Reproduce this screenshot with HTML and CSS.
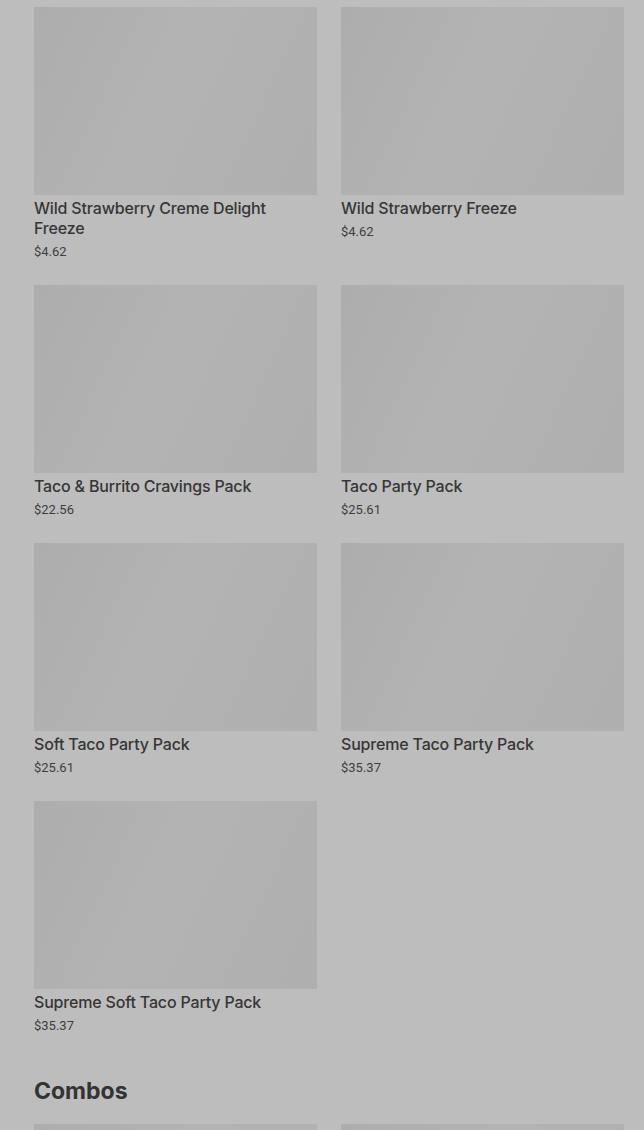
FILE: index.html
```html
<!DOCTYPE html>
<html lang="en">
<head>
    <meta charset="UTF-8">
    <meta name="viewport" content="width=device-width, initial-scale=1.0">
    <title>Menu</title>
    <link rel="stylesheet" href="styles.css">
</head>
<body>
    <div class="menu">
        <div class="grid">
            <div class="card">
                <div class="thumb"></div>
                <div class="name">Wild Strawberry Creme Delight Freeze</div>
                <div class="price">$4.62</div>
            </div>
            <div class="card">
                <div class="thumb"></div>
                <div class="name">Wild Strawberry Freeze</div>
                <div class="price">$4.62</div>
            </div>
            <div class="card">
                <div class="thumb"></div>
                <div class="name">Taco &amp; Burrito Cravings Pack</div>
                <div class="price">$22.56</div>
            </div>
            <div class="card">
                <div class="thumb"></div>
                <div class="name">Taco Party Pack</div>
                <div class="price">$25.61</div>
            </div>
            <div class="card">
                <div class="thumb"></div>
                <div class="name">Soft Taco Party Pack</div>
                <div class="price">$25.61</div>
            </div>
            <div class="card">
                <div class="thumb"></div>
                <div class="name">Supreme Taco Party Pack</div>
                <div class="price">$35.37</div>
            </div>
            <div class="card">
                <div class="thumb"></div>
                <div class="name">Supreme Soft Taco Party Pack</div>
                <div class="price">$35.37</div>
            </div>
        </div>

        <h2 class="section-title">Combos</h2>

        <div class="grid">
            <div class="card">
                <div class="thumb"></div>
            </div>
            <div class="card">
                <div class="thumb"></div>
            </div>
        </div>
    </div>
</body>
</html>
```

FILE: styles.css
```css
body {
    margin: 0;
    background-color: #bdbdbd;
    font-family: 'Inter', 'Liberation Sans', sans-serif;
    color: #363636;
}

.menu {
    padding: 7px 20px 0 34px;
}

.grid {
    display: grid;
    grid-template-columns: 1fr 1fr;
    column-gap: 24px;
    row-gap: 24px;
}

.thumb {
    height: 188px;
    background: linear-gradient(115deg, #adadad 0%, #b3b3b3 45%, #afafaf 100%);
}

.name {
    margin-top: 3px;
    font-size: 16px;
    font-weight: 500;
    line-height: 20px;
    letter-spacing: -0.18px;
    padding-right: 40px;
}

.price {
    margin-top: 5px;
    font-family: 'Roboto', sans-serif;
    font-size: 13px;
    line-height: 18px;
    color: #3d3d3d;
}

.section-title {
    margin: 43px 0 20px;
    font-family: 'Inter', sans-serif;
    font-size: 23px;
    font-weight: 700;
    line-height: 26px;
    letter-spacing: 0;
    color: #333;
}
```
